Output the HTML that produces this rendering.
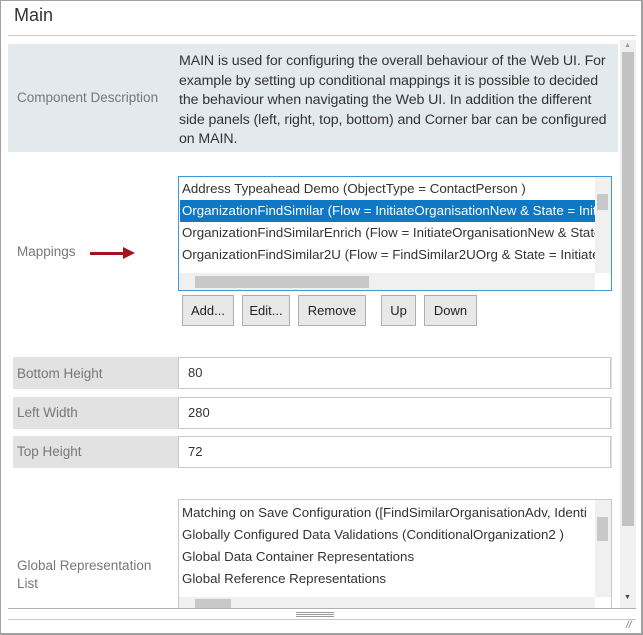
<!DOCTYPE html>
<html><head><style>
body{margin:0;width:643px;height:635px;position:relative;overflow:hidden;background:#fff;font-family:"Liberation Sans",sans-serif;font-size:13px;color:#333}
div,span{position:absolute;box-sizing:border-box}
.lbl{color:#777;font-size:13.5px;white-space:nowrap}
.box{border:1px solid #ababab;background:#fff}
.row{left:1px;height:22px;line-height:22px;padding-left:2px;white-space:nowrap;overflow:hidden;width:415px;font-size:13.3px}
.btn{top:295px;height:31px;border:1px solid #adadad;background:#e8e8e8;line-height:29px;text-align:center;color:#222}
.band{left:13px;width:599px;background:#e2e2e2;height:32px}
.inp{left:178px;width:433px;height:32px;border:1px solid #c8c8c8;background:#fff;line-height:30px;padding-left:9px}
</style></head><body>
<div style="left:14px;top:5px;font-size:18px;color:#333">Main</div>
<div style="left:8px;top:35px;width:628px;height:1px;background:#c8c8c8"></div>
<div style="left:620px;top:40px;width:16px;height:568px;background:#f0f0f0"></div>
<div style="left:622px;top:52px;width:12px;height:474px;background:#c2c2c2"></div>
<div style="left:624px;top:42px;font-size:7px;color:#999">▲</div>
<div style="left:624px;top:594px;font-size:7px;color:#444">▼</div>
<div style="left:8px;top:44px;width:610px;height:108px;background:#e2eaed"></div>
<div class="lbl" style="left:17px;top:90px">Component Description</div>
<div style="left:179px;top:52px;width:440px;line-height:19.5px;color:#333;font-size:14.2px;white-space:nowrap;letter-spacing:-0.1px">MAIN is used for configuring the overall behaviour of the Web UI. For<br>example by setting up conditional mappings it is possible to decided<br>the behaviour when navigating the Web UI. In addition the different<br>side panels (left, right, top, bottom) and Corner bar can be configured<br>on MAIN.</div>
<div class="lbl" style="left:17px;top:244px">Mappings</div>
<div style="left:90px;top:252px;width:35px;height:3px;background:#a0141c"></div>
<div style="left:123px;top:247px;width:0;height:0;border-left:12px solid #a0141c;border-top:6px solid transparent;border-bottom:6px solid transparent"></div>
<div class="box" style="left:178px;top:176px;width:434px;height:115px;border-color:#3c9ad8">
 <div class="row" style="top:1px">Address Typeahead Demo (ObjectType = ContactPerson )</div>
 <div class="row" style="top:23px;background:#0f78c5;color:#fff">OrganizationFindSimilar (Flow = InitiateOrganisationNew &amp; State = Initia</div>
 <div class="row" style="top:45px">OrganizationFindSimilarEnrich (Flow = InitiateOrganisationNew &amp; State</div>
 <div class="row" style="top:67px">OrganizationFindSimilar2U (Flow = FindSimilar2UOrg &amp; State = Initiate</div>
 <div style="left:416px;top:0;width:16px;height:96px;background:#f0f0f0"></div>
 <div style="left:418px;top:17px;width:11px;height:16px;background:#c8c8c8"></div>
 <div style="left:0;top:96px;width:416px;height:17px;background:#f0f0f0"></div>
 <div style="left:16px;top:99px;width:174px;height:12px;background:#c8c8c8"></div>
</div>
<div class="btn" style="left:182px;width:52px">Add...</div>
<div class="btn" style="left:242px;width:48px">Edit...</div>
<div class="btn" style="left:298px;width:68px">Remove</div>
<div class="btn" style="left:381px;width:35px">Up</div>
<div class="btn" style="left:424px;width:53px">Down</div>
<div class="band" style="top:357px"></div><div class="lbl" style="left:17px;top:366px">Bottom Height</div><div class="inp" style="top:357px">80</div>
<div class="band" style="top:397px"></div><div class="lbl" style="left:17px;top:405px">Left Width</div><div class="inp" style="top:397px">280</div>
<div class="band" style="top:436px"></div><div class="lbl" style="left:17px;top:444px">Top Height</div><div class="inp" style="top:436px">72</div>
<div class="lbl" style="left:17px;top:557px;line-height:18px">Global Representation<br>List</div>
<div class="box" style="left:178px;top:499px;width:434px;height:112px;border-color:#c8c8c8">
 <div class="row" style="top:2px">Matching on Save Configuration ([FindSimilarOrganisationAdv, Identi</div>
 <div class="row" style="top:24px">Globally Configured Data Validations (ConditionalOrganization2 )</div>
 <div class="row" style="top:46px">Global Data Container Representations</div>
 <div class="row" style="top:68px">Global Reference Representations</div>
 <div style="left:416px;top:0;width:16px;height:97px;background:#f0f0f0"></div>
 <div style="left:418px;top:17px;width:11px;height:24px;background:#c8c8c8"></div>
 <div style="left:0;top:97px;width:416px;height:14px;background:#f0f0f0"></div>
 <div style="left:16px;top:99px;width:36px;height:12px;background:#c8c8c8"></div>
</div>
<div style="left:0;top:608px;width:643px;height:27px;background:#fff"></div>
<div style="left:8px;top:608px;width:628px;height:1px;background:#b0b0b0"></div>
<div style="left:296px;top:612px;width:38px;height:1px;background:#999"></div>
<div style="left:296px;top:614px;width:38px;height:1px;background:#999"></div>
<div style="left:296px;top:616px;width:38px;height:1px;background:#999"></div>
<div style="left:8px;top:619px;width:628px;height:1px;background:#c8c8c8"></div>
<div style="left:626px;top:620px;font-size:10px;color:#777;font-style:italic">//</div>
<div style="left:0;top:0;width:643px;height:635px;border:1px solid #a0a0a0;border-right-width:2px;border-bottom-width:2px"></div>
</body></html>
